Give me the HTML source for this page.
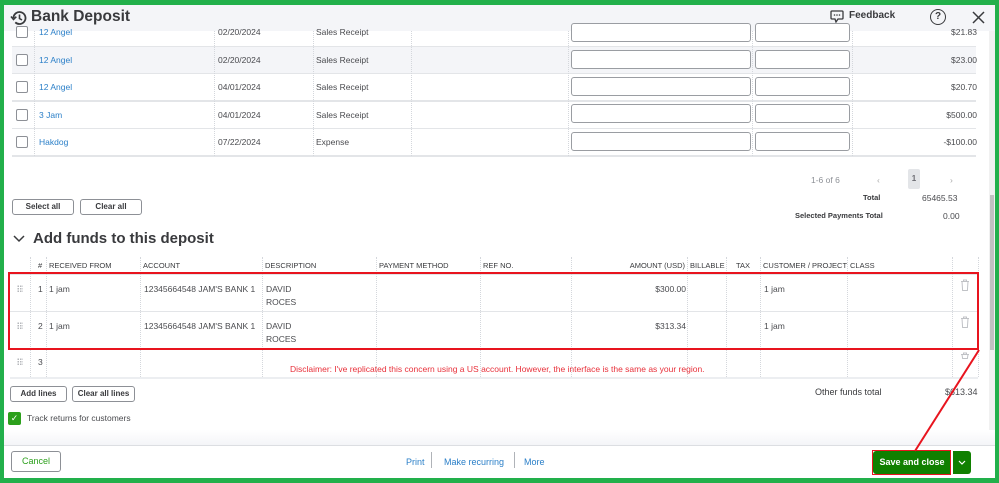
<!DOCTYPE html>
<html><head><meta charset="utf-8"><style>
*{box-sizing:border-box;margin:0;padding:0}
body{width:999px;height:483px;overflow:hidden;background:#22b04b;font-family:"Liberation Sans",sans-serif;color:#393a3d;position:relative}
.a{position:absolute;white-space:nowrap}
#main{position:absolute;left:4px;top:5px;width:991px;height:473px;background:#fff;overflow:hidden}
.t{font-size:8.5px;color:#4a4b4f}
.lk{color:#2a7fc8}
.vl{position:absolute;border-left:1px dotted #d4d7dc}
.hl{position:absolute;height:1px;background:#e3e5e8}
.cb{position:absolute;width:12px;height:12px;border:1px solid #8d9096;border-radius:2px;background:#fff}
.in{position:absolute;height:19px;border:1px solid #9a9da2;border-radius:3px;background:#fff}
.btn{position:absolute;border:1px solid #8d9096;border-radius:3px;background:#fff;font-size:8px;font-weight:bold;text-align:center;color:#393a3d}
.hd{font-size:7.5px;color:#393a3d}
.dr{position:absolute;width:6px;height:8px;background-image:radial-gradient(circle,#b5b7bb 0.8px,transparent 1px);background-size:2.5px 2.5px}
</style></head><body>
<div id="main">
<div class="a" style="left:0;top:0;width:991px;height:26px;background:#f4f5f8"></div>
<svg class="a" style="left:5px;top:3px" width="20" height="20" viewBox="0 0 20 20"><path d="M4.5 10a6 6 0 1 1 1.8 4.3" fill="none" stroke="#393a3d" stroke-width="1.8"/><path d="M2 8.5l2.5 3 2.8-2.8" fill="none" stroke="#393a3d" stroke-width="1.6"/><path d="M10.5 6.5v4l2.5 1.5" fill="none" stroke="#393a3d" stroke-width="1.6"/></svg>
<div class="a" style="left:27px;top:3px;font-size:15.5px;font-weight:bold;color:#393a3d">Bank Deposit</div>
<svg class="a" style="left:826px;top:5px" width="14" height="13" viewBox="0 0 14 13"><path d="M2 1h10a1 1 0 0 1 1 1v6a1 1 0 0 1-1 1H8l-2 3-1-3H2a1 1 0 0 1-1-1V2a1 1 0 0 1 1-1z" fill="none" stroke="#393a3d" stroke-width="1.3"/><circle cx="4.5" cy="5" r=".8" fill="#393a3d"/><circle cx="7" cy="5" r=".8" fill="#393a3d"/><circle cx="9.5" cy="5" r=".8" fill="#393a3d"/></svg>
<div class="a" style="left:845px;top:5px;font-size:10px;font-weight:bold">Feedback</div>
<div class="a" style="left:926px;top:4px;width:16px;height:16px;border:1.5px solid #393a3d;border-radius:50%;font-size:10px;font-weight:bold;text-align:center;line-height:13px">?</div>
<svg class="a" style="left:968px;top:6px" width="13" height="13" viewBox="0 0 13 13"><path d="M1 1l11 11M12 1L1 12" stroke="#393a3d" stroke-width="1.5"/></svg>

<div class="a" style="left:8px;top:41px;width:964px;height:27px;background:#f4f5f8"></div>
<div class="hl" style="left:8px;top:41px;width:964px"></div>
<div class="hl" style="left:8px;top:68px;width:964px"></div>
<div class="hl" style="left:8px;top:95px;width:964px;height:2px"></div>
<div class="hl" style="left:8px;top:123px;width:964px"></div>
<div class="hl" style="left:8px;top:150px;width:964px;height:2px"></div>
<div class="vl" style="left:30px;top:26px;height:125px"></div>
<div class="vl" style="left:210px;top:26px;height:125px"></div>
<div class="vl" style="left:309px;top:26px;height:125px"></div>
<div class="vl" style="left:407px;top:26px;height:125px"></div>
<div class="vl" style="left:564px;top:26px;height:125px"></div>
<div class="vl" style="left:748px;top:26px;height:125px"></div>
<div class="vl" style="left:848px;top:26px;height:125px"></div>

<div class="cb" style="left:12px;top:21px"></div>
<div class="a t lk" style="left:35px;top:22px">12 Angel</div><div class="a t" style="left:214px;top:22px">02/20/2024</div><div class="a t" style="left:312px;top:22px">Sales Receipt</div>
<div class="in" style="left:567px;top:18px;width:180px"></div><div class="in" style="left:751px;top:18px;width:95px"></div><div class="a t" style="right:18px;top:22px">$21.83</div>

<div class="cb" style="left:12px;top:49px"></div>
<div class="a t lk" style="left:35px;top:50px">12 Angel</div><div class="a t" style="left:214px;top:50px">02/20/2024</div><div class="a t" style="left:312px;top:50px">Sales Receipt</div>
<div class="in" style="left:567px;top:45px;width:180px"></div><div class="in" style="left:751px;top:45px;width:95px"></div><div class="a t" style="right:18px;top:50px">$23.00</div>

<div class="cb" style="left:12px;top:76px"></div>
<div class="a t lk" style="left:35px;top:77px">12 Angel</div><div class="a t" style="left:214px;top:77px">04/01/2024</div><div class="a t" style="left:312px;top:77px">Sales Receipt</div>
<div class="in" style="left:567px;top:72px;width:180px"></div><div class="in" style="left:751px;top:72px;width:95px"></div><div class="a t" style="right:18px;top:77px">$20.70</div>

<div class="cb" style="left:12px;top:104px"></div>
<div class="a t lk" style="left:35px;top:105px">3 Jam</div><div class="a t" style="left:214px;top:105px">04/01/2024</div><div class="a t" style="left:312px;top:105px">Sales Receipt</div>
<div class="in" style="left:567px;top:99px;width:180px"></div><div class="in" style="left:751px;top:99px;width:95px"></div><div class="a t" style="right:18px;top:105px">$500.00</div>

<div class="cb" style="left:12px;top:131px"></div>
<div class="a t lk" style="left:35px;top:132px">Hakdog</div><div class="a t" style="left:214px;top:132px">07/22/2024</div><div class="a t" style="left:312px;top:132px">Expense</div>
<div class="in" style="left:567px;top:127px;width:180px"></div><div class="in" style="left:751px;top:127px;width:95px"></div><div class="a t" style="right:18px;top:132px">-$100.00</div>

<div class="a t" style="left:807px;top:170px;color:#8d9096">1-6 of 6</div>
<div class="a t" style="left:873px;top:170px;color:#aaa">‹</div>
<div class="a" style="left:904px;top:164px;width:12px;height:20px;background:#e3e5e8;border-radius:2px;font-size:8px;font-weight:bold;text-align:center;line-height:20px;color:#6b6c72">1</div>
<div class="a t" style="left:946px;top:170px;color:#aaa">›</div>
<div class="a" style="left:859px;top:188px;font-size:7.5px;font-weight:bold">Total</div>
<div class="a t" style="left:918px;top:188px">65465.53</div>
<div class="a" style="left:791px;top:206px;font-size:7.5px;font-weight:bold">Selected Payments Total</div>
<div class="a t" style="left:939px;top:206px">0.00</div>
<div class="btn" style="left:8px;top:194px;width:62px;height:16px;line-height:14px">Select all</div>
<div class="btn" style="left:76px;top:194px;width:62px;height:16px;line-height:14px">Clear all</div>

<svg class="a" style="left:9px;top:229px" width="12" height="10" viewBox="0 0 12 10"><path d="M1 2l5 5 5-5" fill="none" stroke="#393a3d" stroke-width="1.5"/></svg>
<div class="a" style="left:29px;top:225px;font-size:15px;font-weight:bold;color:#393a3d">Add funds to this deposit</div>

<div class="hl" style="left:6px;top:269px;width:968px"></div>
<div class="hl" style="left:6px;top:306px;width:968px"></div>
<div class="hl" style="left:6px;top:344px;width:968px"></div>
<div class="hl" style="left:6px;top:372px;width:968px;height:2px;background:#eceef1"></div>
<div class="vl" style="left:26px;top:252px;height:120px"></div>
<div class="vl" style="left:42px;top:252px;height:120px"></div>
<div class="vl" style="left:136px;top:252px;height:120px"></div>
<div class="vl" style="left:258px;top:252px;height:120px"></div>
<div class="vl" style="left:372px;top:252px;height:120px"></div>
<div class="vl" style="left:476px;top:252px;height:120px"></div>
<div class="vl" style="left:567px;top:252px;height:120px"></div>
<div class="vl" style="left:683px;top:252px;height:120px"></div>
<div class="vl" style="left:722px;top:252px;height:120px"></div>
<div class="vl" style="left:756px;top:252px;height:120px"></div>
<div class="vl" style="left:843px;top:252px;height:120px"></div>
<div class="vl" style="left:948px;top:252px;height:120px"></div>
<div class="vl" style="left:974px;top:252px;height:120px"></div>

<div class="a hd" style="left:34px;top:256px">#</div>
<div class="a hd" style="left:45px;top:256px">RECEIVED FROM</div>
<div class="a hd" style="left:139px;top:256px">ACCOUNT</div>
<div class="a hd" style="left:261px;top:256px">DESCRIPTION</div>
<div class="a hd" style="left:375px;top:256px">PAYMENT METHOD</div>
<div class="a hd" style="left:479px;top:256px">REF NO.</div>
<div class="a hd" style="right:310px;top:256px">AMOUNT (USD)</div>
<div class="a hd" style="left:686px;top:256px">BILLABLE</div>
<div class="a hd" style="left:732px;top:256px">TAX</div>
<div class="a hd" style="left:759px;top:256px">CUSTOMER / PROJECT</div>
<div class="a hd" style="left:846px;top:256px">CLASS</div>

<div class="dr" style="left:13px;top:280px"></div>
<div class="a t" style="left:34px;top:279px">1</div><div class="a t" style="left:45px;top:279px">1 jam</div>
<div class="a t" style="left:140px;top:279px">12345664548 JAM'S BANK 1</div>
<div class="a t" style="left:262px;top:278px;line-height:13px">DAVID<br>ROCES</div>
<div class="a t" style="right:309px;top:279px">$300.00</div>
<div class="a t" style="left:760px;top:279px">1 jam</div>

<div class="dr" style="left:13px;top:317px"></div>
<div class="a t" style="left:34px;top:316px">2</div><div class="a t" style="left:45px;top:316px">1 jam</div>
<div class="a t" style="left:140px;top:316px">12345664548 JAM'S BANK 1</div>
<div class="a t" style="left:262px;top:315px;line-height:13px">DAVID<br>ROCES</div>
<div class="a t" style="right:309px;top:316px">$313.34</div>
<div class="a t" style="left:760px;top:316px">1 jam</div>

<div class="dr" style="left:13px;top:353px"></div>
<div class="a t" style="left:34px;top:352px">3</div>
<svg class="a" style="left:956px;top:274px" width="10" height="80" viewBox="0 0 10 80"><g fill="none" stroke="#c0c2c6" stroke-width="1"><path d="M1 2.5h8M3.5 2.5V1h3v1.5M2 2.5l.6 9h4.8l.6-9"/><path d="M1 39.5h8M3.5 39.5V38h3v1.5M2 39.5l.6 9h4.8l.6-9"/><path d="M1 75.5h8M3.5 75.5V74h3v1.5M2 75.5l.6 4h4.8l.6-4"/></g></svg>
<div class="a" style="left:286px;top:359px;font-size:8.5px;color:#e8303a">Disclaimer: I've replicated this concern using a US account. However, the interface is the same as your region.</div>

<div class="a" style="left:4px;top:267px;width:971px;height:78px;border:2px solid #e8141e"></div>

<div class="btn" style="left:6px;top:381px;width:57px;height:16px;line-height:14px">Add lines</div>
<div class="btn" style="left:68px;top:381px;width:63px;height:16px;line-height:14px">Clear all lines</div>
<div class="a" style="left:4px;top:407px;width:13px;height:13px;background:#2ca01c;border-radius:2px;color:#fff;font-size:9px;text-align:center;line-height:13px">✓</div>
<div class="a t" style="left:23px;top:408px">Track returns for customers</div>
<div class="a" style="left:811px;top:382px;font-size:9px;color:#393a3d">Other funds total</div>
<div class="a t" style="left:941px;top:382px;font-size:9px">$613.34</div>

<div class="a" style="left:985px;top:26px;width:6px;height:412px;background:#f1f1f1"></div>
<div class="a" style="left:986px;top:190px;width:4px;height:155px;background:#c1c1c1"></div>

<div class="a" style="left:0;top:425px;width:991px;height:15px;background:linear-gradient(#fff,#f4f5f8)"></div>
<div class="a" style="left:0;top:440px;width:991px;height:1px;background:#dcdee2"></div>
<div class="a" style="left:0;top:441px;width:991px;height:32px;background:#fff"></div>
<div class="a" style="left:7px;top:446px;width:50px;height:21px;border:1px solid #8d9096;border-radius:3px;color:#2ca01c;font-size:9px;text-align:center;line-height:19px">Cancel</div>
<div class="a lk" style="left:402px;top:452px;font-size:9px">Print</div>
<div class="a" style="left:427px;top:447px;width:1px;height:16px;background:#b0b3b8"></div>
<div class="a lk" style="left:440px;top:452px;font-size:9px">Make recurring</div>
<div class="a" style="left:510px;top:447px;width:1px;height:16px;background:#b0b3b8"></div>
<div class="a lk" style="left:520px;top:452px;font-size:9px">More</div>
<div class="a" style="left:869px;top:446px;width:78px;height:23px;background:#108000;border-radius:3px 0 0 3px;color:#fff;font-size:9px;font-weight:bold;text-align:center;line-height:23px">Save and close</div>
<div class="a" style="left:949px;top:446px;width:18px;height:23px;background:#108000;border-radius:0 3px 3px 0"></div>
<svg class="a" style="left:954px;top:455px" width="8" height="6" viewBox="0 0 8 6"><path d="M1 1l3 3 3-3" fill="none" stroke="#fff" stroke-width="1.2"/></svg>
<div class="a" style="left:868px;top:445px;width:79px;height:25px;border:1.5px solid #e8141e"></div>
<svg class="a" style="left:0;top:0" width="991" height="473"><line x1="975" y1="345" x2="911" y2="446" stroke="#e8141e" stroke-width="2"/></svg>
</div>
</body></html>
